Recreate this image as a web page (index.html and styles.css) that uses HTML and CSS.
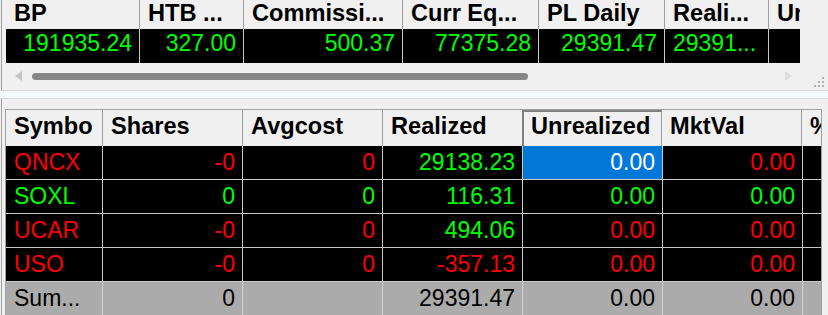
FILE: index.html
```html
<!DOCTYPE html>
<html>
<head>
<meta charset="utf-8">
<link rel="stylesheet" href="styles.css">
</head>
<body>
<div class="app">
  <div class="top">
    <div class="tgrid">
      <div class="trow thead">
        <div class="c t1">BP</div>
        <div class="c t2">HTB ...</div>
        <div class="c t3">Commissi...</div>
        <div class="c t4">Curr Eq...</div>
        <div class="c t5">PL Daily</div>
        <div class="c t6">Reali...</div>
        <div class="c t7">Unrealized</div>
      </div>
      <div class="trow tdata">
        <div class="c t1 r g">191935.24</div>
        <div class="c t2 r g">327.00</div>
        <div class="c t3 r g">500.37</div>
        <div class="c t4 r g">77375.28</div>
        <div class="c t5 r g">29391.47</div>
        <div class="c t6 g">29391...</div>
        <div class="c t7"></div>
      </div>
    </div>
    <div class="hscroll">
      <svg class="arr-l" width="10" height="12" viewBox="0 0 10 12"><polygon points="8,0 8,10 1,5" fill="#c4c4c4"/></svg>
      <div class="thumb"></div>
      <svg class="arr-r" width="10" height="12" viewBox="0 0 10 12"><polygon points="1,0 1,10 8,5" fill="#dcdcdc"/></svg>
      <svg class="grip" width="12" height="12" viewBox="0 0 12 12">
        <rect x="9" y="0" width="2" height="2" fill="#b0b0b0"/>
        <rect x="5" y="4" width="2" height="2" fill="#b0b0b0"/>
        <rect x="9" y="4" width="2" height="2" fill="#b0b0b0"/>
        <rect x="1" y="8" width="2" height="2" fill="#b0b0b0"/>
        <rect x="5" y="8" width="2" height="2" fill="#b0b0b0"/>
        <rect x="9" y="8" width="2" height="2" fill="#b0b0b0"/>
      </svg>
    </div>
  </div>
  <div class="split"></div>
  <div class="bottom">
    <div class="bgrid">
      <div class="brow bhead">
        <div class="c b1">Symbo</div>
        <div class="c b2">Shares</div>
        <div class="c b2">Avgcost</div>
        <div class="c b2">Realized</div>
        <div class="c b2 sorted">Unrealized</div>
        <div class="c b2">MktVal</div>
        <div class="c b7">%</div>
      </div>
      <div class="brow data">
        <div class="c b1 red">QNCX</div>
        <div class="c b2 r red">-0</div>
        <div class="c b2 r red">0</div>
        <div class="c b2 r g">29138.23</div>
        <div class="c b2 r sel">0.00</div>
        <div class="c b2 r red">0.00</div>
        <div class="c b7"></div>
      </div>
      <div class="brow data">
        <div class="c b1 g">SOXL</div>
        <div class="c b2 r g">0</div>
        <div class="c b2 r g">0</div>
        <div class="c b2 r g">116.31</div>
        <div class="c b2 r g">0.00</div>
        <div class="c b2 r g">0.00</div>
        <div class="c b7"></div>
      </div>
      <div class="brow data">
        <div class="c b1 red">UCAR</div>
        <div class="c b2 r red">-0</div>
        <div class="c b2 r red">0</div>
        <div class="c b2 r g">494.06</div>
        <div class="c b2 r red">0.00</div>
        <div class="c b2 r red">0.00</div>
        <div class="c b7"></div>
      </div>
      <div class="brow data">
        <div class="c b1 red">USO</div>
        <div class="c b2 r red">-0</div>
        <div class="c b2 r red">0</div>
        <div class="c b2 r red">-357.13</div>
        <div class="c b2 r red">0.00</div>
        <div class="c b2 r red">0.00</div>
        <div class="c b7"></div>
      </div>
      <div class="brow sum">
        <div class="c b1">Sum...</div>
        <div class="c b2 r">0</div>
        <div class="c b2 r"></div>
        <div class="c b2 r">29391.47</div>
        <div class="c b2 r">0.00</div>
        <div class="c b2 r">0.00</div>
        <div class="c b7"></div>
      </div>
    </div>
  </div>
</div>
</body>
</html>
```

FILE: styles.css
```css
html, body {
  margin: 0;
  padding: 0;
}
body {
  width: 828px;
  height: 315px;
  overflow: hidden;
  background: #f0f0f0;
  font-family: "Liberation Sans", Arial, sans-serif;
  font-size: 23px;
}
.app {
  width: 828px;
  height: 315px;
  overflow: hidden;
}
.top {
  margin-left: 1px;
  border-left: 1px solid #a0a0a0;
  border-bottom: 1px solid #d4d4d4;
  padding-left: 4px;
  background: #f0f0f0;
}
.tgrid {
  width: 794px;
  overflow: hidden;
}
.trow {
  display: flex;
  white-space: nowrap;
}
.c {
  flex-shrink: 0;
  box-sizing: border-box;
  overflow: hidden;
  white-space: nowrap;
  padding: 0 7px 0 8px;
}
.r { text-align: right; }
.g { color: #00ff00; }
.red { color: #ff0000; }

.thead .c {
  height: 29px;
  line-height: 26px;
  padding-bottom: 3px;
  font-size: 23.6px;
  font-weight: bold;
  color: #000;
  background: #f0f0f0;
  border-right: 1px solid #a0a0a0;
}
.tdata .c {
  height: 34px;
  line-height: 29px;
  padding-bottom: 5px;
  background: #000;
  border-right: 1px solid #c8c8c8;
}
.t1 { width: 134px; }
.t2 { width: 104px; }
.t3 { width: 159px; }
.t4 { width: 136px; }
.t5 { width: 126px; }
.t6 { width: 104px; }
.t7 { width: 60px; }

.hscroll {
  display: flex;
  align-items: center;
  height: 27px;
}
.arr-l { margin-left: 8px; }
.thumb {
  margin-left: 8px;
  width: 496px;
  height: 7px;
  border-radius: 4px;
  background: #868686;
}
.arr-r { margin-left: auto; margin-right: 0; }
.grip {
  align-self: flex-end;
  margin-left: 19px;
  margin-right: 3px;
  margin-bottom: 1px;
}

.split {
  height: 7px;
  background: #f5f8fc;
  border-bottom: 1px solid #dadada;
}
.bottom {
  margin-left: 1px;
  border-left: 1px solid #a0a0a0;
  padding-left: 3px;
  padding-top: 10px;
  background: #f0f0f0;
}
.bgrid {
  width: 815px;
  border-left: 1px solid #a0a0a0;
  border-top: 1px solid #a0a0a0;
  border-right: 1px solid #a0a0a0;
  overflow: hidden;
}
.brow {
  display: flex;
}
.b1 { width: 97px; }
.b2 { width: 140px; }
.b7 { width: 60px; }
.bhead .c {
  height: 36px;
  line-height: 32px;
  padding-bottom: 4px;
  font-size: 23.6px;
  font-weight: bold;
  color: #000;
  background: #f0f0f0;
  border-right: 1px solid #a0a0a0;
}
.bhead .sorted {
  border-top: 2px solid #808080;
  border-left: 2px solid #808080;
  margin-left: -1px;
  line-height: 28px;
  padding-bottom: 6px;
  padding-left: 7px;
}
.data .c {
  height: 34px;
  line-height: 33px;
  padding-bottom: 1px;
  background: #000;
  border-right: 1px solid #c8c8c8;
  border-bottom: 1px solid #c8c8c8;
}
.data .sel {
  background: #0078d7;
  color: #fff;
}
.sum .c {
  height: 34px;
  line-height: 33px;
  padding-bottom: 1px;
  background: #ababab;
  color: #000;
  border-right: 1px solid #d0d0d0;
}
```
